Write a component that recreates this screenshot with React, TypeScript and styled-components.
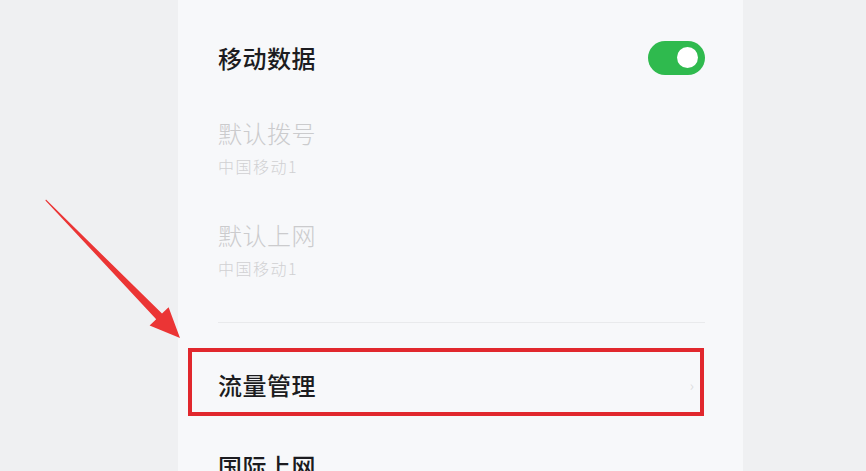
import React from "react";
import styled, { createGlobalStyle } from "styled-components";

const GlobalStyle = createGlobalStyle`
  html, body {
    margin: 0;
    padding: 0;
    background: #eff0f2;
  }
  body {
    font-family: "Noto Sans CJK SC", "Noto Sans", sans-serif;
  }
`;

const Page = styled.div`
  position: relative;
  height: 471px;
  overflow: hidden;
  display: grid;
  grid-template-columns: 178px 565px 1fr;
  background: #eff0f2;
`;

const Panel = styled.div`
  grid-column: 2;
  background: #f7f8fa;
  padding: 0 38px 0 40px;
  display: flex;
  flex-direction: column;
`;

const SwitchRow = styled.div`
  height: 116px;
  display: flex;
  align-items: center;
  justify-content: space-between;
`;

const Title = styled.div<{ $muted?: boolean }>`
  font-size: 24px;
  line-height: 34px;
  letter-spacing: 0.5px;
  color: ${(p) => (p.$muted ? "#cbcbcd" : "#1c1c20")};
  font-weight: ${(p) => (p.$muted ? 300 : 500)};
`;

const Sub = styled.div`
  font-size: 16px;
  line-height: 22px;
  letter-spacing: 1.5px;
  color: #d0d0d2;
  font-weight: 300;
  margin-top: 5px;
`;

const TwoLineRow = styled.div`
  height: 102px;
  display: flex;
  flex-direction: column;
`;

const Toggle = styled.div<{ $on: boolean }>`
  width: 57px;
  height: 34px;
  border-radius: 17px;
  background: ${(p) => (p.$on ? "#2fba4e" : "#d6d6d6")};
  display: flex;
  align-items: center;
  justify-content: ${(p) => (p.$on ? "flex-end" : "flex-start")};
  padding: 0 7px;
  box-sizing: border-box;
  margin-top: -1px;
`;

const Knob = styled.div`
  width: 21px;
  height: 21px;
  border-radius: 50%;
  background: #ffffff;
`;

const Divider = styled.div`
  height: 1px;
  background: #e9eaec;
  margin-top: 2px;
`;

const Highlight = styled.div`
  margin: 25px 1px 0 -30px;
  height: 68px;
  border: 4px solid #e1272d;
  box-sizing: border-box;
  display: flex;
  align-items: center;
  justify-content: space-between;
  padding: 6px 6px 0 26px;
`;

const Chevron = styled.span`
  color: #dcdcde;
  font-size: 14px;
  line-height: 1;
`;

const PlainRow = styled.div`
  margin-top: 33px;
`;

const ArrowLayer = styled.svg`
  position: absolute;
  left: 0;
  top: 0;
  pointer-events: none;
`;

export default function App() {
  return (
    <>
      <GlobalStyle />
      <Page>
        <Panel>
          <SwitchRow>
            <Title>移动数据</Title>
            <Toggle $on>
              <Knob />
            </Toggle>
          </SwitchRow>
          <TwoLineRow>
            <Title $muted>默认拨号</Title>
            <Sub>中国移动1</Sub>
          </TwoLineRow>
          <TwoLineRow>
            <Title $muted>默认上网</Title>
            <Sub>中国移动1</Sub>
          </TwoLineRow>
          <Divider />
          <Highlight>
            <Title>流量管理</Title>
            <Chevron>›</Chevron>
          </Highlight>
          <PlainRow>
            <Title>国际上网</Title>
          </PlainRow>
        </Panel>
        <ArrowLayer width="866" height="471" viewBox="0 0 866 471">
          <defs>
            <filter id="soft" x="-10%" y="-10%" width="120%" height="120%">
              <feGaussianBlur stdDeviation="0.6" />
            </filter>
          </defs>
          <polygon
            points="46,199.5 162,313.6 168.6,307.2 180,338 149.6,325.6 156.2,319.2 45.4,200.4"
            fill="#eb3535"
            filter="url(#soft)"
          />
        </ArrowLayer>
      </Page>
    </>
  );
}
